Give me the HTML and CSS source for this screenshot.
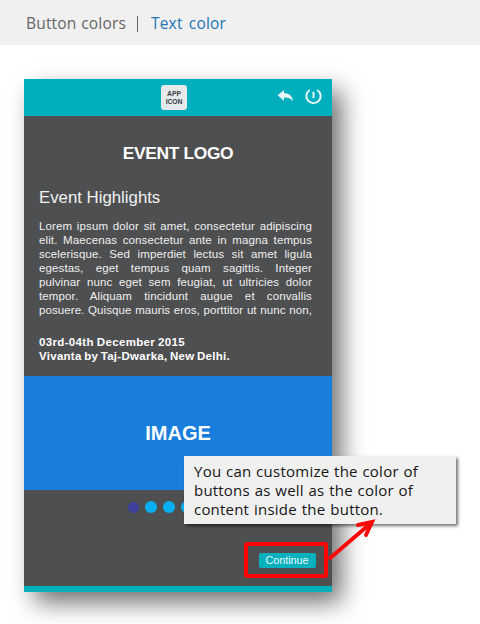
FILE: index.html
```html
<!DOCTYPE html>
<html lang="en">
<head>
<meta charset="utf-8">
<title>Button colors</title>
<link rel="stylesheet" href="styles.css">
</head>
<body>
<header class="topbar">
  <span class="crumb">Button colors</span>
  <span class="divider"></span>
  <span class="crumb active">Text color</span>
</header>
<main class="phone">
  <div class="appbar">
    <div class="app-icon">APP<br>ICON</div>
    <div class="actions">
      <svg width="17" height="12" viewBox="0 0 17 12"><path d="M.5 5.2 7 0v3.1C12.2 3.2 15.3 6 16 11.3 13.7 8.4 11.2 7.6 7 7.6v3.1z" fill="#e6f7f9"/></svg>
      <svg width="17" height="17" viewBox="0 0 17 17" fill="none" stroke="#e6f7f9" stroke-width="2"><path d="M4.8 2A7.1 7.1 0 1 0 12.2 2M8.5 3.7v6.5"/></svg>
    </div>
  </div>
  <h1 class="logo">EVENT LOGO</h1>
  <section class="details">
    <h2>Event Highlights</h2>
    <div class="copy">
      <p>Lorem ipsum dolor sit amet, consectetur adipiscing</p>
      <p>elit. Maecenas consectetur ante in magna tempus</p>
      <p>scelerisque. Sed imperdiet lectus sit amet ligula</p>
      <p>egestas, eget tempus quam sagittis. Integer</p>
      <p>pulvinar nunc eget sem feugiat, ut ultricies dolor</p>
      <p>tempor. Aliquam tincidunt augue et convallis</p>
      <p class="tight">posuere. Quisque mauris eros, porttitor ut nunc non,</p>
    </div>
    <div class="event">
      <p class="date">03rd-04th December 2015</p>
      <p class="place">Vivanta by Taj-Dwarka, New Delhi.</p>
    </div>
  </section>
  <div class="image">IMAGE</div>
  <div class="dots"><i class="current"></i><i></i><i></i><i></i></div>
  <div class="footer"><div class="highlight"><button>Continue</button></div></div>
</main>
<aside class="callout">
  <p class="line-one">You can customize the color of</p>
  <p class="line-two">buttons as well as the color of</p>
  <p class="line-three">content inside the button.</p>
</aside>
<svg class="arrow" width="52" height="46" viewBox="0 0 52 46" fill="none" stroke="#fc0606" stroke-width="4"><path d="M1 41 43 5"/><path d="M30 7 44 4 38 17" stroke-linecap="round"/></svg>
</body>
</html>
```
FILE: styles.css
```css
* { box-sizing: border-box; }
body { margin: 0; width: 480px; height: 624px; position: relative; overflow: hidden; background: #fff; font-family: "Liberation Sans", Arial, sans-serif; }
p, h1, h2 { margin: 0; }
.topbar { height: 45px; padding: 0 0 0 26px; display: flex; align-items: center; background: #f0f0f0; color: #666; font: 15.5px "Open Sans", sans-serif; }
.crumb { width: 100px; white-space: nowrap; text-align-last: justify; letter-spacing: .18px; }
.divider { width: 1px; height: 16px; margin: 2px 13px 0 11px; background: #666; }
.active { color: #2474b8; width: 75px; }
.phone { width: 308px; height: 513px; margin: 34px 0 0 24px; background: #4e4f51; color: #fff; box-shadow: 10px 11px 23px -1px rgba(0,0,0,.58); border-bottom: 6px solid #05b0bd; }
.appbar { height: 37px; background: #00afbd; display: grid; grid-template-columns: 137px 26px 1fr; align-items: center; }
.app-icon { grid-column: 2; width: 26px; height: 25px; padding-top: 5px; border-radius: 3px; background: #e5e9eb; color: #353b40; text-align: center; font-size: 6.7px; font-weight: bold; line-height: 7.5px; }
.actions { display: flex; justify-content: flex-end; align-items: center; gap: 11px; padding: 0 10px 3px 0; }
.logo { height: 72px; padding-top: 27px; text-align: center; font-size: 17.4px; line-height: 20px; letter-spacing: -.35px; }
.details { height: 188px; padding: 0 20px 0 15px; }
h2 { font-weight: normal; font-size: 16.8px; line-height: 19px; color: #f1f1f1; }
.copy { margin-top: 12px; color: #f0f0f0; font-size: 11.5px; line-height: 14px; letter-spacing: .12px; word-spacing: -1.5px; }
.copy p { text-align: justify; text-align-last: justify; white-space: nowrap; }
.copy .tight { letter-spacing: .08px; word-spacing: -2px; }
.event { margin-top: 18px; font-size: 11.5px; font-weight: bold; line-height: 14px; white-space: nowrap; }
.event p { text-align-last: justify; word-spacing: -2px; }
.date { width: 146px; letter-spacing: .35px; }
.place { width: 191px; letter-spacing: .28px; }
.image { height: 114px; display: flex; align-items: center; justify-content: center; background: #197edb; font-size: 20px; font-weight: bold; }
.dots { height: 34px; display: flex; align-items: center; gap: 6px; padding-left: 104px; }
.dots i { width: 12px; height: 12px; border-radius: 50%; background: #08aff2; }
.dots .current { background: #3d409b; width: 11px; height: 11px; }
.footer { display: flex; justify-content: flex-end; padding: 18px 4px 0 0; }
.highlight { width: 84px; height: 36px; border: 4px solid #fc0505; border-radius: 3px; display: flex; align-items: center; justify-content: center; padding-left: 2px; }
button { width: 57px; height: 15px; padding: 0; border: 0; border-radius: 2px; background: #08b0be; color: #e8fafa; font: 10.8px/15px "Liberation Sans", sans-serif; }
.callout { position: absolute; left: 184px; top: 456px; width: 272px; height: 68px; padding: 6px 0 0 10px; background: #f0f0f0; color: #161616; box-shadow: 2px 2px 3px rgba(0,0,0,.55); font: 15px/19px "Open Sans", sans-serif; }
.callout p { white-space: nowrap; text-align-last: justify; }
.line-one { width: 224px; letter-spacing: .25px; }
.line-two { width: 219px; letter-spacing: .2px; }
.line-three { width: 189px; letter-spacing: .2px; }
.arrow { position: absolute; left: 328px; top: 518px; }
```
